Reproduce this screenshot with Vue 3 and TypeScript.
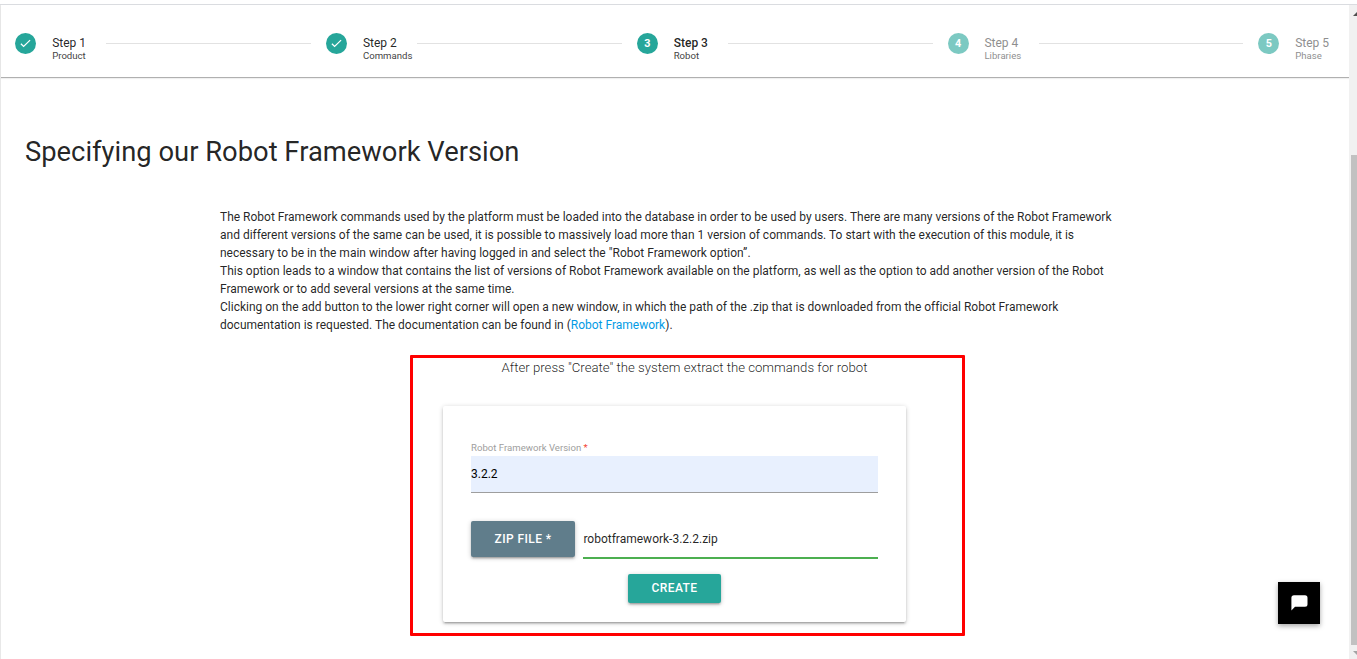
<script setup lang="ts">
import { ref } from 'vue'

interface Step {
  id: number
  name: string
  state: 'done' | 'active' | 'pending'
}

const steps: Step[] = [
  { id: 1, name: 'Product', state: 'done' },
  { id: 2, name: 'Commands', state: 'done' },
  { id: 3, name: 'Robot', state: 'active' },
  { id: 4, name: 'Libraries', state: 'pending' },
  { id: 5, name: 'Phase', state: 'pending' },
]

const lines: string[] = [
  'The Robot Framework commands used by the platform must be loaded into the database in order to be used by users. There are many versions of the Robot Framework',
  'and different versions of the same can be used, it is possible to massively load more than 1 version of commands. To start with the execution of this module, it is',
  'necessary to be in the main window after having logged in and select the "Robot Framework option”.',
  'This option leads to a window that contains the list of versions of Robot Framework available on the platform, as well as the option to add another version of the Robot',
  'Framework or to add several versions at the same time.',
  'Clicking on the add button to the lower right corner will open a new window, in which the path of the .zip that is downloaded from the official Robot Framework',
]

const version = ref('3.2.2')
const fileName = ref('robotframework-3.2.2.zip')
</script>

<template>
  <div class="window">
    <div class="page">
      <header class="stepper">
        <template v-for="step in steps" :key="step.id">
          <div class="step" :class="step.state">
            <span class="badge">
              <svg v-if="step.state === 'done'" viewBox="0 0 24 24" width="13" height="13">
                <path d="M3.5 12.5 L8.5 17.5 L20.5 5.8" fill="none" stroke="#fff" stroke-width="2.3" />
              </svg>
              <template v-else>{{ step.id }}</template>
            </span>
            <span class="label">
              <span class="title">Step {{ step.id }}</span>
              <span class="name">{{ step.name }}</span>
            </span>
          </div>
          <span v-if="step.id < steps.length" class="connector"></span>
        </template>
      </header>

      <main>
        <h1>Specifying our Robot Framework Version</h1>
        <div class="copy">
          <p v-for="line in lines" :key="line">{{ line }}</p>
          <p>documentation is requested. The documentation can be found in (<a href="#">Robot Framework</a>).</p>
        </div>

        <section class="outline">
          <p class="hint">After press "Create" the system extract the commands for robot</p>
          <form class="card" @submit.prevent>
            <label class="caption" for="version">Robot Framework Version <em>*</em></label>
            <input id="version" v-model="version" class="version" />
            <div class="file-row">
              <button type="button" class="file-btn">ZIP FILE *</button>
              <input v-model="fileName" class="file-name" />
            </div>
            <button type="submit" class="create">CREATE</button>
          </form>
        </section>
      </main>
    </div>

    <aside class="scrollbar">
      <svg class="arrow" width="8" height="5" viewBox="0 0 8 5"><path d="M4 0 L8 4 H0 Z" fill="#505050" /></svg>
      <span class="thumb"></span>
      <svg class="arrow" width="8" height="5" viewBox="0 0 8 5"><path d="M0 0 H8 L4 4 Z" fill="#a3a3a3" /></svg>
    </aside>

    <button class="chat" aria-label="Chat">
      <svg width="17" height="16" viewBox="0 0 17 16">
        <path d="M3 0.3 H14 Q16.5 0.3 16.5 2.8 V9.2 Q16.5 11.7 14 11.7 H4 L0.4 15.6 V2.8 Q0.4 0.3 3 0.3 Z" fill="#fff" />
      </svg>
    </button>
  </div>
</template>

<style>
body {
  margin: 0;
  overflow: hidden;
  background: #fff;
}
</style>

<style scoped>
.window {
  position: relative;
  box-sizing: border-box;
  display: flex;
  width: 1357px;
  height: 659px;
  padding-top: 4px;
  overflow: hidden;
  background: linear-gradient(#dadce0, #dadce0) 0 4px / 100% 1px no-repeat #fff;
  font-family: Roboto, "Liberation Sans", sans-serif;
  color: rgba(0, 0, 0, 0.87);
}
.page {
  box-sizing: border-box;
  width: 1349px;
  margin-top: 1px;
  border-left: 1px solid #e8e8e8;
}
p, h1 { margin: 0; font-weight: 400; }
button, input { font-family: inherit; border: 0; padding: 0; }

.stepper {
  box-sizing: border-box;
  display: flex;
  align-items: flex-start;
  height: 73px;
  padding: 28px 0 0 14.4px;
  border-bottom: 1px solid #b0b0b0;
  box-shadow: 0 1px 1px rgba(0, 0, 0, 0.06);
}
.step {
  display: flex;
  flex: 0 0 91px;
  width: 91px;
}
.badge {
  display: flex;
  align-items: center;
  justify-content: center;
  flex: 0 0 21px;
  height: 21px;
  margin-right: 15.8px;
  border-radius: 50%;
  background: #26a69a;
  color: #fff;
  font-size: 10.8px;
  font-weight: 700;
}
.label { display: flex; flex-direction: column; white-space: nowrap; }
.title { height: 17px; line-height: 20px; font-size: 12px; }
.name { line-height: 12px; font-size: 9.6px; color: #444; }
.active .title { font-weight: 500; }
.pending { opacity: 0.6; }
.pending .title { color: #444; }
.connector {
  flex: 0 0 204.75px;
  height: 1px;
  margin: 10px 15px 0 0;
  background: #e2e2e2;
}

h1 {
  margin: 55px 0 0 24px;
  height: 38px;
  line-height: 38px;
  font-size: 27.36px;
  white-space: nowrap;
}
.copy {
  margin: 37px 0 0 219px;
  font-size: 12px;
  line-height: 18px;
  letter-spacing: -0.005px;
  white-space: nowrap;
}
.copy a { color: #039be5; text-decoration: none; }

.outline {
  box-sizing: border-box;
  width: 555px;
  height: 281px;
  margin: 21px 0 0 409px;
  border: 3px solid #f00;
  border-radius: 1px;
}
.hint {
  height: 48px;
  padding-right: 6px;
  line-height: 19px;
  font-size: 13.2px;
  font-weight: 300;
  text-align: center;
  white-space: nowrap;
}
.card {
  box-sizing: border-box;
  display: flex;
  flex-direction: column;
  width: 463px;
  height: 216px;
  margin-left: 30px;
  padding: 34px 28px 0;
  border-radius: 2px;
  box-shadow: 0 2px 2px 0 rgba(0, 0, 0, 0.14), 0 3px 1px -2px rgba(0, 0, 0, 0.12), 0 1px 5px 0 rgba(0, 0, 0, 0.2);
}
.caption { height: 16px; line-height: 16px; font-size: 9.6px; color: #9e9e9e; }
.caption em { color: #f44336; font-style: normal; }
.version {
  box-sizing: border-box;
  height: 37px;
  border-bottom: 1px solid #9e9e9e;
  background: #e8f0fe;
  font-size: 12px;
  color: #000;
}
.file-row { display: flex; gap: 8px; margin-top: 28px; }
.file-btn, .create {
  border-radius: 2px;
  color: #fff;
  font-size: 12px;
  font-weight: 500;
  letter-spacing: 0.4px;
  box-shadow: 0 2px 2px 0 rgba(0, 0, 0, 0.14), 0 3px 1px -2px rgba(0, 0, 0, 0.12), 0 1px 5px 0 rgba(0, 0, 0, 0.2);
}
.file-btn { flex: 0 0 104px; height: 36px; background: #607d8b; }
.file-name {
  box-sizing: border-box;
  flex: 1;
  min-width: 0;
  height: 38px;
  padding-left: 0.4px;
  border-bottom: 2px solid #4caf50;
  background: transparent;
  font-size: 12px;
  color: rgba(0, 0, 0, 0.87);
}
.create {
  width: 93px;
  height: 29px;
  margin: 15px 0 0 157px;
  padding-bottom: 2px;
  background: #26a69a;
}

.scrollbar {
  display: flex;
  flex-direction: column;
  align-items: flex-start;
  box-sizing: border-box;
  width: 8px;
  margin-top: 1px;
  padding: 7px 0 0 2px;
  background: #f1f1f1;
}
.arrow { margin-left: 2px; flex: none; }
.thumb {
  width: 6px;
  height: 490px;
  margin: 138px 0 6px;
  background: #c1c1c1;
}
.chat {
  position: absolute;
  left: 1278px;
  top: 582px;
  display: flex;
  align-items: center;
  justify-content: center;
  width: 42px;
  height: 42px;
  background: #000;
  box-shadow: 0 2px 5px rgba(0, 0, 0, 0.35);
}
</style>
